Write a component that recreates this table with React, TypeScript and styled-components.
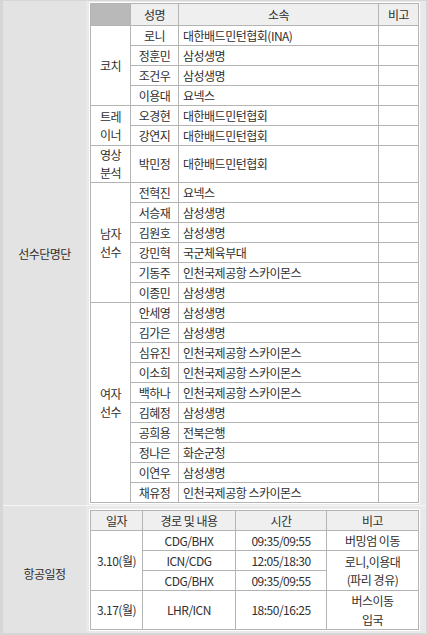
import React from "react";
import styled, { createGlobalStyle } from "styled-components";

const Global = createGlobalStyle`
  html, body { margin: 0; padding: 0; background: #ffffff; }
  body { font-family: "Noto Sans CJK KR", "Noto Sans", sans-serif; }
`;

const Frame = styled.div`
  width: 428px;
  height: 635px;
  box-sizing: border-box;
  background: #d6d6d6;
  padding: 1px 2px 2px 3px;
  display: flex;
  flex-direction: column;
  font-family: "Noto Sans CJK KR", "Noto Sans", sans-serif;
  font-size: 12px;
  letter-spacing: -0.5px;
  color: #2f2f2f;
`;

const Section = styled.div<{ $divider?: boolean }>`
  display: grid;
  grid-template-columns: 83px 1fr;
  border-top: ${(p) => (p.$divider ? "1px solid #f6f6f6" : "none")};
  flex: ${(p) => (p.$divider ? "1 1 auto" : "0 0 auto")};
`;

const Label = styled.div<{ $shift?: number }>`
  background: #e3e3e3;
  display: flex;
  align-items: center;
  justify-content: center;
  font-size: 12px;
  padding-top: ${(p) => p.$shift ?? 0}px;
`;

const Content = styled.div<{ $top: number }>`
  background: #e9e9e9;
  padding: ${(p) => p.$top}px 6px 1px 3px;
`;

const TableWrap = styled.div`
  background: #ffffff;
  padding: 1px;
`;

const Table = styled.table`
  width: 329px;
  border-collapse: collapse;
  border: 1px solid #b4b4b4;
  table-layout: fixed;
`;

const Th = styled.th<{ $dark?: boolean; $h: number }>`
  background: ${(p) => (p.$dark ? "#b9b9b9" : "#efefef")};
  border: 1px solid #b4b4b4;
  height: ${(p) => p.$h}px;
  padding: 0 2px;
  font-weight: normal;
  text-align: center;
  vertical-align: middle;
  line-height: 18px;
  color: #2f2f2f;
`;

const Td = styled.td<{ $left?: boolean; $h?: number; $lh?: number }>`
  border: 1px solid #b4b4b4;
  height: ${(p) => p.$h ?? 19}px;
  padding: 0 ${(p) => (p.$left ? "4px" : "2px")};
  text-align: ${(p) => (p.$left ? "left" : "center")};
  vertical-align: middle;
  line-height: ${(p) => p.$lh ?? 18}px;
  white-space: nowrap;
  background: #ffffff;
`;

type Member = { name: string; org: string };
type Group = { label: string[]; members: Member[] };

const groups: Group[] = [
  {
    label: ["코치"],
    members: [
      { name: "로니", org: "대한배드민턴협회(INA)" },
      { name: "정훈민", org: "삼성생명" },
      { name: "조건우", org: "삼성생명" },
      { name: "이용대", org: "요넥스" },
    ],
  },
  {
    label: ["트레", "이너"],
    members: [
      { name: "오경현", org: "대한배드민턴협회" },
      { name: "강연지", org: "대한배드민턴협회" },
    ],
  },
  {
    label: ["영상", "분석"],
    members: [{ name: "박민정", org: "대한배드민턴협회" }],
  },
  {
    label: ["남자", "선수"],
    members: [
      { name: "전혁진", org: "요넥스" },
      { name: "서승재", org: "삼성생명" },
      { name: "김원호", org: "삼성생명" },
      { name: "강민혁", org: "국군체육부대" },
      { name: "기동주", org: "인천국제공항 스카이몬스" },
      { name: "이종민", org: "삼성생명" },
    ],
  },
  {
    label: ["여자", "선수"],
    members: [
      { name: "안세영", org: "삼성생명" },
      { name: "김가은", org: "삼성생명" },
      { name: "심유진", org: "인천국제공항 스카이몬스" },
      { name: "이소희", org: "인천국제공항 스카이몬스" },
      { name: "백하나", org: "인천국제공항 스카이몬스" },
      { name: "김혜정", org: "삼성생명" },
      { name: "공희용", org: "전북은행" },
      { name: "정나은", org: "화순군청" },
      { name: "이연우", org: "삼성생명" },
      { name: "채유정", org: "인천국제공항 스카이몬스" },
    ],
  },
];

const Lines = ({ lines }: { lines: string[] }) => (
  <>
    {lines.map((l, i) => (
      <React.Fragment key={i}>
        {i > 0 && <br />}
        {l}
      </React.Fragment>
    ))}
  </>
);

export default function App() {
  return (
    <>
      <Global />
      <Frame>
        <Section>
          <Label>선수단명단</Label>
          <Content $top={1}>
            <TableWrap>
              <Table>
                <colgroup>
                  <col style={{ width: 40 }} />
                  <col style={{ width: 48 }} />
                  <col />
                  <col style={{ width: 40 }} />
                </colgroup>
                <thead>
                  <tr>
                    <Th $dark $h={21} />
                    <Th $h={21}>성명</Th>
                    <Th $h={21}>소속</Th>
                    <Th $h={21}>비고</Th>
                  </tr>
                </thead>
                <tbody>
                  {groups.map((g) =>
                    g.members.map((m, i) => (
                      <tr key={g.label.join("") + m.name}>
                        {i === 0 && (
                          <Td rowSpan={g.members.length}>
                            <Lines lines={g.label} />
                          </Td>
                        )}
                        <Td>{m.name}</Td>
                        <Td $left>{m.org}</Td>
                        <Td />
                      </tr>
                    ))
                  )}
                </tbody>
              </Table>
            </TableWrap>
          </Content>
        </Section>
        <Section $divider>
          <Label $shift={8}>항공일정</Label>
          <Content $top={3}>
            <TableWrap>
              <Table>
                <colgroup>
                  <col style={{ width: 52 }} />
                  <col style={{ width: 93 }} />
                  <col style={{ width: 91 }} />
                  <col />
                </colgroup>
                <thead>
                  <tr>
                    <Th $h={19}>일자</Th>
                    <Th $h={19}>경로 및 내용</Th>
                    <Th $h={19}>시간</Th>
                    <Th $h={19}>비고</Th>
                  </tr>
                </thead>
                <tbody>
                  <tr>
                    <Td rowSpan={3}>3.10(월)</Td>
                    <Td>CDG/BHX</Td>
                    <Td>09:35/09:55</Td>
                    <Td>버밍엄 이동</Td>
                  </tr>
                  <tr>
                    <Td>ICN/CDG</Td>
                    <Td>12:05/18:30</Td>
                    <Td rowSpan={2}>
                      <Lines lines={["로니,이용대", "(파리 경유)"]} />
                    </Td>
                  </tr>
                  <tr>
                    <Td>CDG/BHX</Td>
                    <Td>09:35/09:55</Td>
                  </tr>
                  <tr>
                    <Td $h={37}>3.17(월)</Td>
                    <Td $h={37}>LHR/ICN</Td>
                    <Td $h={37}>18:50/16:25</Td>
                    <Td $h={37} $lh={19}>
                      <Lines lines={["버스이동", "입국"]} />
                    </Td>
                  </tr>
                </tbody>
              </Table>
            </TableWrap>
          </Content>
        </Section>
      </Frame>
    </>
  );
}
